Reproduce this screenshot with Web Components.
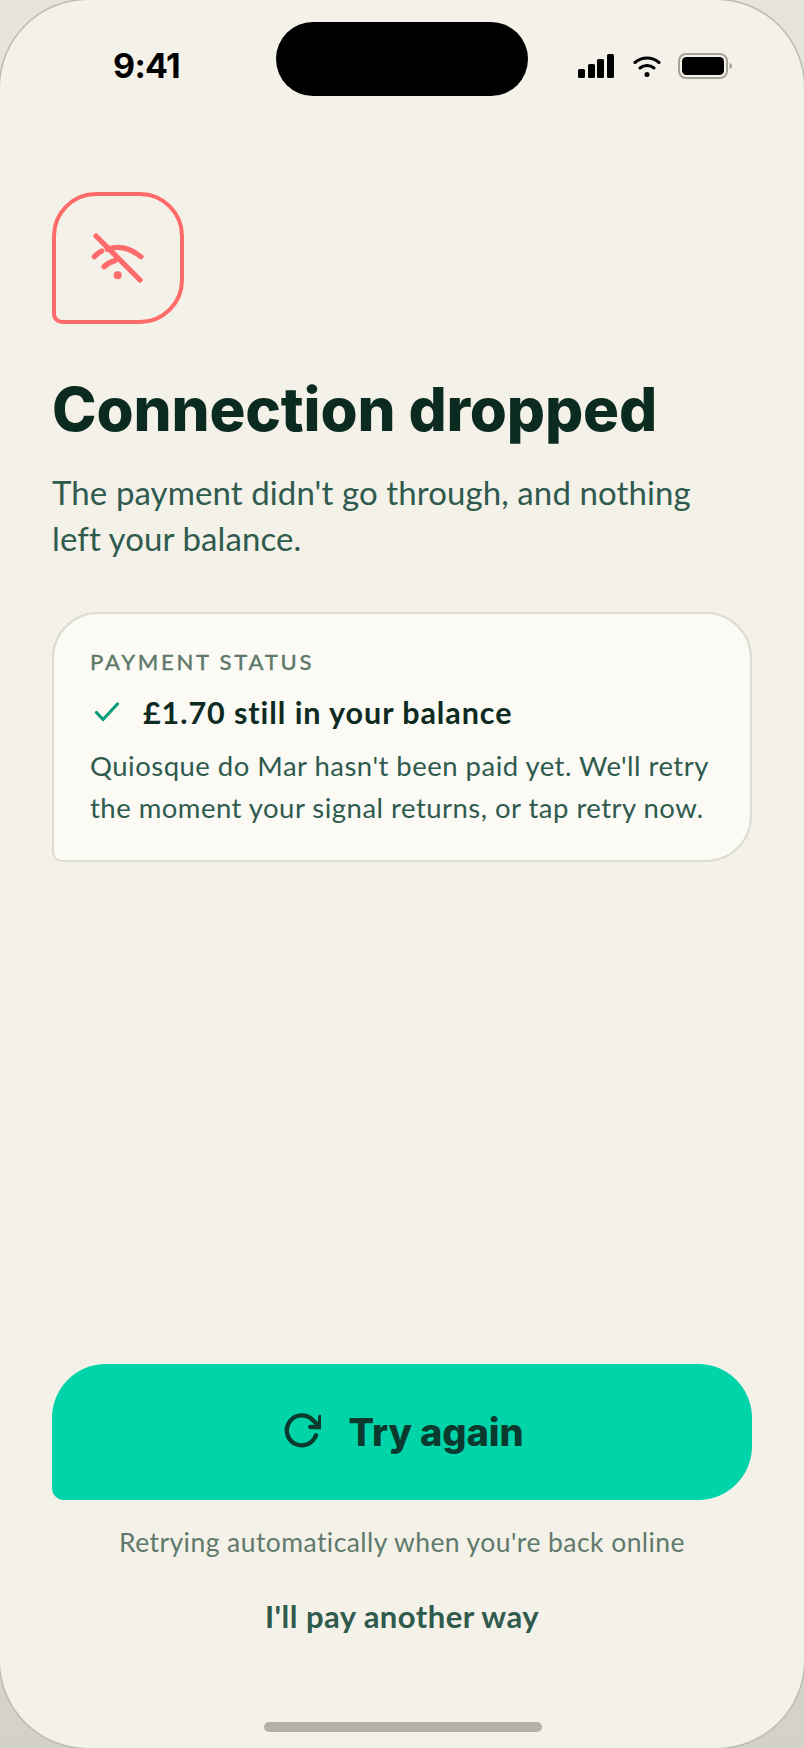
<!DOCTYPE html>
<html lang="en"><head><meta charset="utf-8"><title>Connection dropped</title>
<style>html,body{margin:0;padding:0;background:linear-gradient(#e7e4da,#d4d2c6)}body{width:804px;height:1748px;overflow:hidden}</style>
</head><body>
<phone-screen>
  <status-bar slot="status"></status-bar>
  <alert-badge></alert-badge>
  <h-title>Connection dropped</h-title>
  <lead-text>The payment didn't go through, and nothing left your balance.</lead-text>
  <status-card></status-card>
  <retry-button slot="actions">Try again</retry-button>
  <hint-text slot="actions">Retrying automatically when you're back online</hint-text>
  <link-action slot="actions">I'll pay another way</link-action>
</phone-screen>
<template id="tpl-card">
<style>
:host{display:block;box-sizing:border-box;height:250px;margin-top:51px;padding:34px 36px 0;background:#fbfaf5;border:2px solid #dcdcd3;border-radius:46px 46px 46px 10px;font-family:"Lato",sans-serif;font-variant-ligatures:none}
.k{font-size:22px;line-height:28px;letter-spacing:2.75px;color:#5f7a6c;font-weight:500;-webkit-text-stroke:.3px #5f7a6c}
.row{display:flex;align-items:center;gap:23px;margin-top:14px;height:44px}
.t{font-size:30.5px;font-weight:700;letter-spacing:.93px;color:#0d2b22}
svg{display:block}
.d{margin-top:11px;font-size:27.5px;line-height:41.5px;letter-spacing:.48px;color:#2f5a4e;white-space:nowrap}
</style>
<div class="k">PAYMENT STATUS</div>
<div class="row"><svg width="30" height="30" viewBox="0 0 30 30" fill="none" stroke="#0a9d7a" stroke-width="3.2" stroke-linecap="round" stroke-linejoin="round"><path d="M6.500 15.500L13 22.500L27.500 7"/></svg><span class="t">£1.70 still in your balance</span></div>
<div class="d">Quiosque do Mar hasn't been paid yet. We'll retry<br>the moment your signal returns, or tap retry now.</div>
</template>
<script>
function def(name, html){customElements.define(name,class extends HTMLElement{constructor(){super();this.attachShadow({mode:'open'}).innerHTML=html}})}
def('phone-screen',`<style>
:host{display:flex;flex-direction:column;box-sizing:border-box;width:804px;height:1748px;background:#f4f1e8;border-radius:88px;box-shadow:0 0 0 1.5px #bdbbb0;overflow:hidden}
.main{flex:1;padding:0 52px}
.actions{padding:0 52px 0}
.home{display:flex;justify-content:center;padding:0 0 16px 2px}
.home div{width:278px;height:10px;border-radius:5px;background:#b3b1aa}
</style><slot name="status"></slot><div class="main"><slot></slot></div><div class="actions"><slot name="actions"></slot></div>
<div class="home"><div></div></div>`);
def('status-bar',`<style>
:host{display:flex;align-items:flex-start;height:192px;padding:0 0 0 113px;box-sizing:border-box}
.time{font:700 34px/1 "Inter",sans-serif;margin-top:49px;letter-spacing:-.7px;color:#000;width:163px}
.island{width:252px;height:74px;margin-top:22px;border-radius:37px;background:#000}
.icons{display:flex;align-items:center;margin:52px 0 0 50px}
.w{margin:3px 17px 0 19px}
</style><span class="time">9:41</span><div class="island"></div>
<div class="icons">
<svg width="36" height="26" viewBox="0 0 36 26" fill="#000"><rect x="0" y="16" width="7" height="9" rx="1.5"/><rect x="10" y="11" width="7" height="14" rx="1.5"/><rect x="19" y="6" width="7" height="19" rx="1.5"/><rect x="29" y="1" width="7" height="24" rx="1.5"/></svg>
<svg class="w" width="28" height="24" viewBox="0 0 28 24" fill="none" stroke="#000" stroke-width="3" stroke-linecap="round"><path d="M2 7.500C9 1.500 19 1.500 26 7.500"/><path d="M7 13C11 9.700 17 9.700 21 13"/><circle cx="14" cy="19.500" r="2.500" fill="#000" stroke="none"/></svg>
<svg width="55" height="26" viewBox="0 0 55 26" fill="none"><rect x="1" y="1" width="48" height="24" rx="7" stroke="#a5a298" stroke-width="2"/><rect x="4" y="4" width="42" height="18" rx="4.500" fill="#000"/><path d="M51.500 9.500l2.500 2.500v2l-2.500 2.500z" fill="#a5a298"/></svg>
</div>`);
def('alert-badge',`<style>
:host{display:flex;align-items:center;justify-content:center;box-sizing:border-box;width:132px;height:132px;border:4px solid #ff6b6b;border-radius:44px 44px 44px 10px}
</style><svg width="60" height="60" viewBox="0 0 60 60" fill="none" stroke="#ff6b6b" stroke-width="5.300" stroke-linecap="round"><path d="M8 8L52 52"/><path d="M6.300 28.700Q9 25.500 13.700 23"/><path d="M19.300 21.300Q36 15 53 28.700"/><path d="M16 38.700Q21 34 27 32.700"/><circle cx="29.700" cy="47.300" r="4" fill="#ff6b6b" stroke="none"/></svg>`);
def('h-title',`<style>:host{display:block;margin-top:47px;font:800 60px/76px "Inter",sans-serif;letter-spacing:-.15px;color:#0b2b21;white-space:nowrap}</style><slot></slot>`);
def('lead-text',`<style>:host{display:block;margin-top:22px;width:680px;font:400 33px/46px "Lato",sans-serif;letter-spacing:.1px;color:#2f5a4e;font-variant-ligatures:none}</style><slot></slot>`);
customElements.define('status-card',class extends HTMLElement{constructor(){super();this.attachShadow({mode:'open'}).appendChild(document.getElementById('tpl-card').content.cloneNode(true))}});
def('retry-button',`<style>
:host{display:flex;align-items:center;justify-content:center;gap:28px;height:136px;background:#00d4a8;border-radius:54px 54px 54px 12px;color:#0a3a2e;font:800 38px/1 "Inter",sans-serif;letter-spacing:-.1px}
</style><svg width="40" height="40" viewBox="-.5 1 24 24" fill="none" stroke="#0a3a2e" stroke-width="2.600" stroke-linecap="round" stroke-linejoin="round"><polyline points="23 4 23 10 17 10"/><path d="M20.490 15a9 9 0 1 1-2.120-9.360L23 10"/></svg><slot></slot>`);
def('hint-text',`<style>:host{display:block;margin-top:24px;text-align:center;font:400 26.5px/36px "Lato",sans-serif;letter-spacing:.44px;color:#5f7a6c;font-variant-ligatures:none;white-space:nowrap}</style><slot></slot>`);
def('link-action',`<style>:host{display:block;margin-top:34px;margin-bottom:84px;text-align:center;font:700 31px/44px "Lato",sans-serif;letter-spacing:.45px;color:#2f5a4e}</style><slot></slot>`);
</script>
</body></html>
